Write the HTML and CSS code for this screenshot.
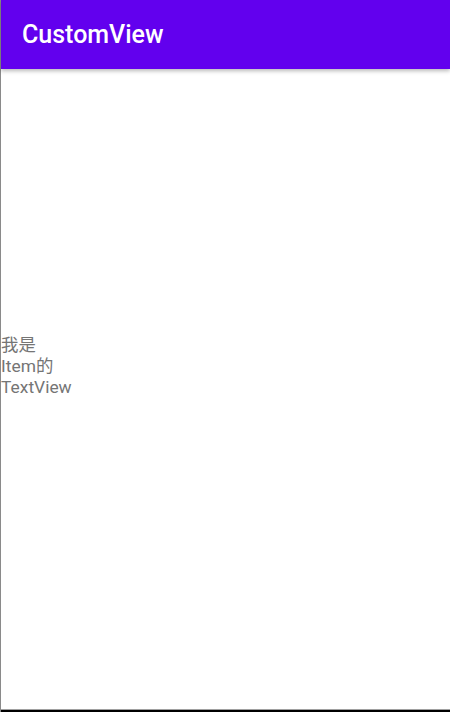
FILE: index.html
```html
<!DOCTYPE html>
<html>
<head>
<meta charset="utf-8">
<link rel="stylesheet" href="styles.css">
</head>
<body>
<div class="screen">
  <header class="toolbar"><span class="title">CustomView</span></header>
  <main class="content">
    <div class="item-text">我是Item的TextView</div>
  </main>
  <div class="bottom-line"></div>
</div>
</body>
</html>
```
FILE: styles.css
```css
html, body {
  margin: 0;
  padding: 0;
  width: 450px;
  height: 712px;
  overflow: hidden;
  background: #ffffff;
}
.screen {
  width: 450px;
  height: 712px;
  display: flex;
  flex-direction: column;
  border-left: 1px solid #8a8a8a;
  box-sizing: border-box;
}
.toolbar {
  height: 69px;
  flex: none;
  background: #6200ee;
  display: flex;
  align-items: center;
  padding-left: 21px;
  box-shadow: 0 2px 4px rgba(0,0,0,0.28);
  position: relative;
  z-index: 1;
}
.title {
  font-family: Roboto, "Noto Sans", sans-serif;
  font-weight: 500;
  font-size: 25px;
  color: #ffffff;
  line-height: 1;
}
.content {
  flex: 1;
  padding-top: 266px;
}
.item-text {
  width: 56px;
  font-family: Roboto, "Noto Sans CJK SC", sans-serif;
  font-size: 17.4px;
  line-height: 21px;
  color: #757575;
}
.bottom-line {
  height: 3px;
  flex: none;
  border-top: 1px solid #a0a0a0;
  background: #000000;
  box-sizing: border-box;
}
```
